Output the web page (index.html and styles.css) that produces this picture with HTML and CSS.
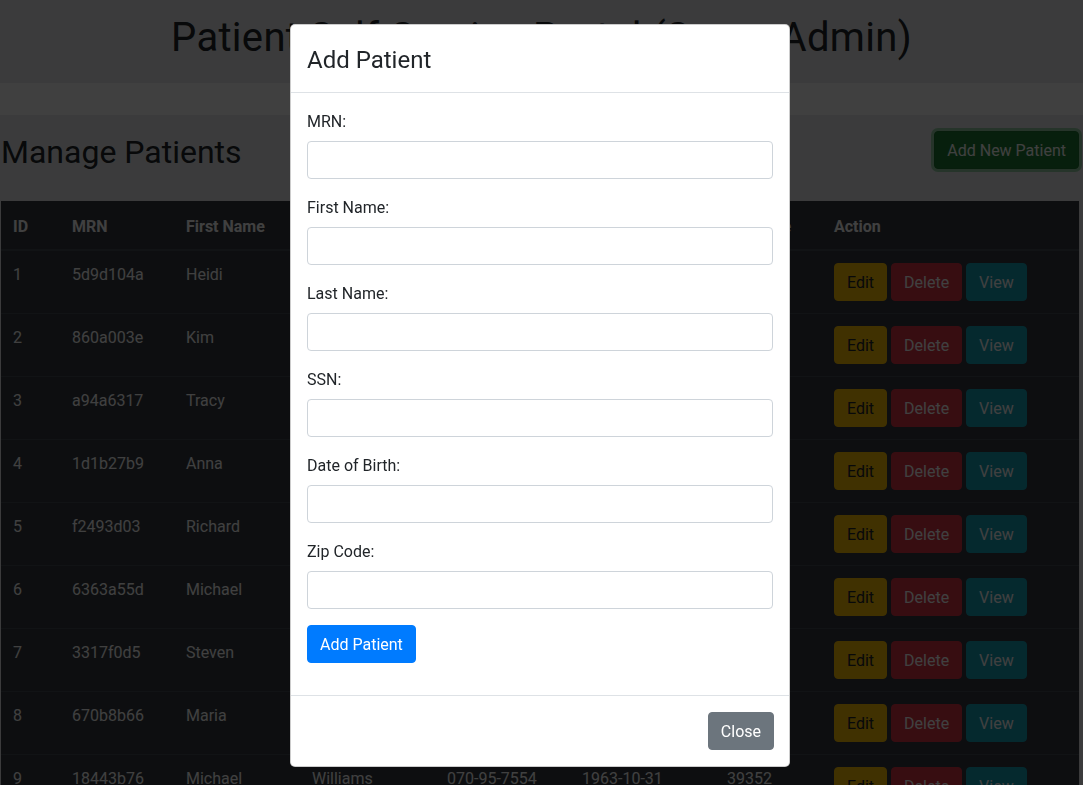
FILE: index.html
```html
<!DOCTYPE html>
<html lang="en">
<head>
<meta charset="utf-8">
<title>Patient Self-Service Portal</title>
<link rel="stylesheet" href="styles.css">
</head>
<body>
<header class="site-header">
  <h1 class="site-title">Patient Self-Service Portal (Super Admin)</h1>
</header>
<div class="spacer-band"></div>
<main class="content">
  <div class="toolbar">
    <h2 class="page-title">Manage Patients</h2>
    <button class="btn btn-success btn-focus" type="button">Add New Patient</button>
  </div>
  <table class="table">
    <thead>
      <tr>
        <th class="c-id">ID</th><th class="c-mrn">MRN</th><th class="c-first">First Name</th><th class="c-last">Last Name</th><th class="c-ssn">SSN</th><th class="c-dob">Date of Birth</th><th class="c-zip">Zip Code</th><th class="c-act">Action</th>
      </tr>
    </thead>
    <tbody>
      <tr><td>1</td><td>5d9d104a</td><td>Heidi</td><td>Johnson</td><td>512-33-8841</td><td>1985-04-12</td><td>20431</td><td><button class="btn btn-warning">Edit</button> <button class="btn btn-danger">Delete</button> <button class="btn btn-info">View</button></td></tr>
      <tr><td>2</td><td>860a003e</td><td>Kim</td><td>Lee</td><td>233-12-9087</td><td>1990-07-23</td><td>10012</td><td><button class="btn btn-warning">Edit</button> <button class="btn btn-danger">Delete</button> <button class="btn btn-info">View</button></td></tr>
      <tr><td>3</td><td>a94a6317</td><td>Tracy</td><td>Brown</td><td>401-77-2210</td><td>1972-11-05</td><td>73301</td><td><button class="btn btn-warning">Edit</button> <button class="btn btn-danger">Delete</button> <button class="btn btn-info">View</button></td></tr>
      <tr><td>4</td><td>1d1b27b9</td><td>Anna</td><td>Garcia</td><td>118-45-6632</td><td>1988-02-17</td><td>94103</td><td><button class="btn btn-warning">Edit</button> <button class="btn btn-danger">Delete</button> <button class="btn btn-info">View</button></td></tr>
      <tr><td>5</td><td>f2493d03</td><td>Richard</td><td>Miller</td><td>629-08-4415</td><td>1969-09-30</td><td>60614</td><td><button class="btn btn-warning">Edit</button> <button class="btn btn-danger">Delete</button> <button class="btn btn-info">View</button></td></tr>
      <tr><td>6</td><td>6363a55d</td><td>Michael</td><td>Davis</td><td>347-61-1928</td><td>1979-06-14</td><td>30303</td><td><button class="btn btn-warning">Edit</button> <button class="btn btn-danger">Delete</button> <button class="btn btn-info">View</button></td></tr>
      <tr><td>7</td><td>3317f0d5</td><td>Steven</td><td>Wilson</td><td>584-90-3371</td><td>1995-01-08</td><td>85004</td><td><button class="btn btn-warning">Edit</button> <button class="btn btn-danger">Delete</button> <button class="btn btn-info">View</button></td></tr>
      <tr><td>8</td><td>670b8b66</td><td>Maria</td><td>Martinez</td><td>276-54-8093</td><td>1983-08-21</td><td>33101</td><td><button class="btn btn-warning">Edit</button> <button class="btn btn-danger">Delete</button> <button class="btn btn-info">View</button></td></tr>
      <tr><td>9</td><td>18443b76</td><td>Michael</td><td>Williams</td><td>070-95-7554</td><td>1963-10-31</td><td>39352</td><td><button class="btn btn-warning">Edit</button> <button class="btn btn-danger">Delete</button> <button class="btn btn-info">View</button></td></tr>
    </tbody>
  </table>
</main>

<div class="modal-backdrop"></div>
<div class="modal">
  <div class="modal-content">
    <div class="modal-header">
      <h4 class="modal-title">Add Patient</h4>
    </div>
    <div class="modal-body">
      <form class="patient-form">
        <div class="form-group">
          <label for="mrn">MRN:</label>
          <input class="form-control" id="mrn" type="text">
        </div>
        <div class="form-group">
          <label for="first">First Name:</label>
          <input class="form-control" id="first" type="text">
        </div>
        <div class="form-group">
          <label for="last">Last Name:</label>
          <input class="form-control" id="last" type="text">
        </div>
        <div class="form-group">
          <label for="ssn">SSN:</label>
          <input class="form-control" id="ssn" type="text">
        </div>
        <div class="form-group">
          <label for="dob">Date of Birth:</label>
          <input class="form-control" id="dob" type="text">
        </div>
        <div class="form-group">
          <label for="zip">Zip Code:</label>
          <input class="form-control" id="zip" type="text">
        </div>
        <button class="btn btn-primary" type="submit">Add Patient</button>
      </form>
    </div>
    <div class="modal-footer">
      <button class="btn btn-secondary" type="button">Close</button>
    </div>
  </div>
</div>
</body>
</html>
```
FILE: styles.css
```css
*, *::before, *::after { box-sizing: border-box; }

html, body { height: 100%; }

body {
  margin: 0;
  font-family: Roboto, "Liberation Sans", Arial, sans-serif;
  font-size: 16px;
  line-height: 1.5;
  color: #212529;
  background: #e9ecef;
  overflow: hidden;
}

/* Header */
.site-header {
  background: #e9ecef;
  height: 83px;
  padding-top: 14px;
}
.site-title {
  margin: 0;
  text-align: center;
  font-size: 40px;
  font-weight: 400;
  line-height: 1.2;
  letter-spacing: 0.3px;
}
.spacer-band {
  height: 32px;
  background: #ffffff;
}

/* Content */
.content {
  padding: 0 4px 0 1px;
}
.toolbar {
  display: flex;
  align-items: center;
  justify-content: space-between;
  padding-top: 16px;
  height: 86px;
  padding-bottom: 32px;
}
.page-title {
  margin: 0;
  font-size: 32px;
  font-weight: 400;
  line-height: 1.2;
  padding-top: 4px;
}

/* Buttons */
.btn {
  display: inline-block;
  font-family: inherit;
  font-size: 16px;
  line-height: 1.5;
  font-weight: 400;
  padding: 7px 12px 5px;
  border: 1px solid transparent;
  border-radius: 4px;
  cursor: pointer;
  height: 38px;
}
.btn-success { background: #1e7e34; border-color: #1c7430; color: #fff; }
.btn-focus { box-shadow: 0 0 0 3px rgba(72, 180, 97, 0.5); }
.btn-warning { background: #ffc107; border-color: #ffc107; color: #212529; }
.btn-danger { background: #dc3545; border-color: #dc3545; color: #fff; }
.btn-info { background: #17a2b8; border-color: #17a2b8; color: #fff; }
.btn-primary { background: #007bff; border-color: #007bff; color: #fff; }
.btn-secondary { background: #6c757d; border-color: #6c757d; color: #fff; }

/* Table */
.table {
  width: 100%;
  border-collapse: collapse;
  background: #343a40;
  color: #fff;
}
.table th,
.table td {
  padding: 12px;
  text-align: left;
  vertical-align: top;
  border-top: 1px solid #454d55;
}
.table th {
  font-weight: 700;
  border-top: none;
  border-bottom: 2px solid #454d55;
  vertical-align: bottom;
  padding-top: 14px;
  padding-bottom: 10px;
}
.c-id { width: 59px; }
.c-mrn { width: 114px; }
.c-first { width: 126px; }
.c-last { width: 135px; }
.c-ssn { width: 135px; }
.c-dob { width: 145px; }
.c-zip { width: 107px; }
.c-act { width: auto; }

/* Modal */
.modal-backdrop {
  position: fixed;
  inset: 0;
  background: rgba(0, 0, 0, 0.75);
}
.modal {
  position: fixed;
  inset: 0;
  display: flex;
  justify-content: center;
  align-items: flex-start;
  padding-top: 24px;
}
.modal-content {
  width: 500px;
  margin-left: -3px;
  background: #fff;
  border: 1px solid rgba(0, 0, 0, 0.2);
  border-radius: 5px;
}
.modal-header {
  padding: 18px 16px 14px;
  border-bottom: 1px solid #dee2e6;
}
.modal-title {
  margin: 0;
  font-size: 24px;
  font-weight: 400;
  line-height: 35px;
}
.modal-body {
  padding: 16px 16px 32px;
}
.form-group {
  margin-bottom: 16px;
}
.form-group label {
  display: inline-block;
  padding-top: 1px;
  margin-bottom: 7px;
}
.form-control {
  display: block;
  width: 100%;
  height: 38px;
  padding: 6px 12px;
  font-family: inherit;
  font-size: 16px;
  color: #495057;
  background: #fff;
  border: 1px solid #ced4da;
  border-radius: 4px;
}
.modal-footer {
  display: flex;
  justify-content: flex-end;
  padding: 16px 15px;
  border-top: 1px solid #dee2e6;
}
```
